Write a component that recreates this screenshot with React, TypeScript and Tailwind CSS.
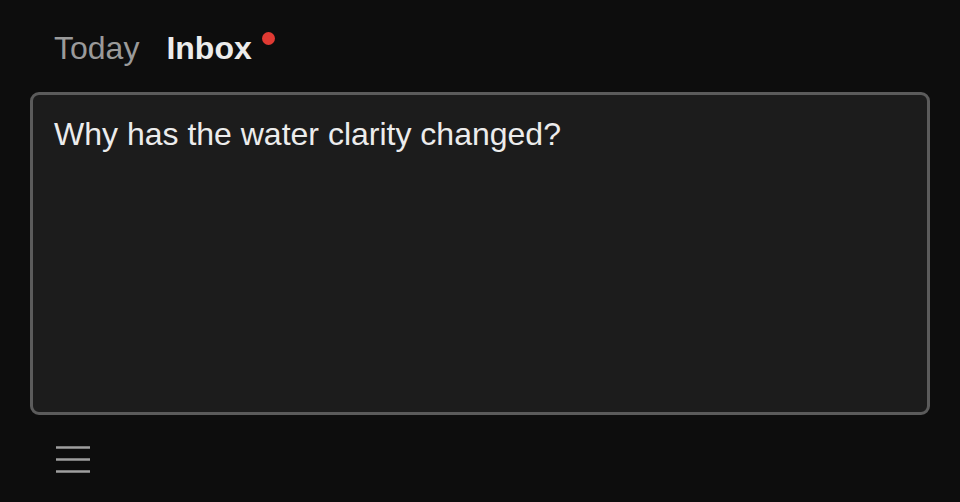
export default function App() {
  return (
    <div className="w-[960px] h-[502px] bg-[#0d0d0d] px-[30px] pt-[28px] font-['Liberation_Sans',Arial,sans-serif] overflow-hidden">
      {/* Tabs */}
      <div className="flex items-start gap-[27px] pl-[24px] h-[40px]">
        <span className="text-[32px] leading-[40px] text-[#9a9a9a]">Today</span>
        <span className="relative text-[32px] leading-[40px] font-bold text-[#ececec]">
          Inbox
          <span className="absolute top-[4px] -right-[23px] w-[13px] h-[13px] rounded-full bg-[#e03a33]"></span>
        </span>
      </div>

      {/* Text area */}
      <div className="mt-[24px] h-[323px] rounded-[9px] border-[3px] border-[#5b5b5b] bg-[#1c1c1c] px-[21px] pt-[19px]">
        <p className="text-[32px] leading-[40px] text-[#ececec]">Why has the water clarity changed?</p>
      </div>

      {/* Menu */}
      <div className="pl-[26px] pt-[31px]">
        <svg width="34" height="28" viewBox="0 0 34 28" fill="none">
          <path d="M0 1.5h34M0 13.5h34M0 25.5h34" stroke="#9f9f9f" strokeWidth="2.5" />
        </svg>
      </div>
    </div>
  );
}
